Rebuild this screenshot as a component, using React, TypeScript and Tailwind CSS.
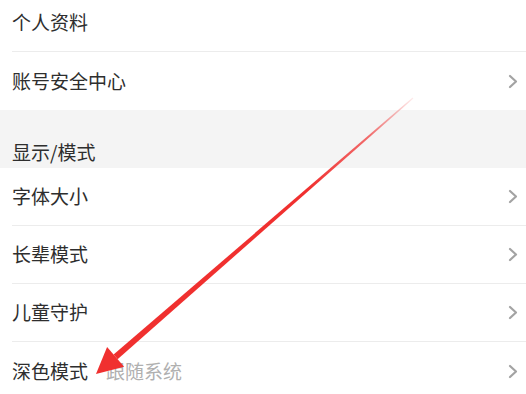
const rows = [
  { label: '字体大小' },
  { label: '长辈模式' },
  { label: '儿童守护' },
  { label: '深色模式', value: '跟随系统' },
];

function Chevron() {
  return (
    <svg width="10" height="15" viewBox="0 0 10 15" fill="none" stroke="#a3a3a3" strokeWidth="2.2" strokeLinecap="round" strokeLinejoin="round">
      <path d="M2 2 L8 7.5 L2 13" />
    </svg>
  );
}

function Row({ label, value, chevron = true, last = false }: { label: string; value?: string; chevron?: boolean; last?: boolean }) {
  return (
    <div className="pl-3 bg-white">
      <div className={`h-[58px] flex items-center pr-[8px] ${last ? '' : 'border-b border-[#ececec]'}`}>
        <span className="text-[19px] text-[#2e2e2e]">{label}</span>
        {value && <span className="ml-[18px] text-[19px] text-[#b0b0b0]">{value}</span>}
        <div className="flex-1" />
        {chevron && <Chevron />}
      </div>
    </div>
  );
}

function Arrow() {
  // tail (413,98) -> tip (96,374), shaft tapers toward the tail
  return (
    <svg className="absolute inset-0 pointer-events-none" width="526" height="394" viewBox="0 0 526 394">
      <defs>
        <linearGradient id="shaft" x1="413" y1="98" x2="114" y2="358" gradientUnits="userSpaceOnUse">
          <stop offset="0" stopColor="#f03c3c" stopOpacity="0.1" />
          <stop offset="0.15" stopColor="#f03c3c" stopOpacity="0.75" />
          <stop offset="0.35" stopColor="#f0302f" />
          <stop offset="1" stopColor="#f0302f" />
        </linearGradient>
      </defs>
      <polygon points="413.4,98.5 412.6,97.5 113.6,354.6 117.6,359.2" fill="url(#shaft)" />
      <polygon points="96,374 107.1,347.1 124.1,366.7" fill="#f0302f" />
    </svg>
  );
}

export default function App() {
  return (
    <div className="relative w-[526px] h-[394px] overflow-hidden bg-white font-['Noto_Sans_CJK_SC','Noto_Sans',sans-serif]">
      <div className="pl-3">
        <div className="h-[52px] flex items-center pb-[6px] border-b border-[#ececec]">
          <span className="text-[19px] text-[#2e2e2e]">个人资料</span>
        </div>
      </div>
      <Row label="账号安全中心" last />
      <div className="h-[58px] bg-[#f4f4f4] flex items-end pl-3 pb-[2px]">
        <span className="text-[19px] text-[#2e2e2e]">显示/模式</span>
      </div>
      {rows.map((r, i) => (
        <Row key={r.label} label={r.label} value={r.value} last={i === rows.length - 1} />
      ))}
      <Arrow />
    </div>
  );
}
